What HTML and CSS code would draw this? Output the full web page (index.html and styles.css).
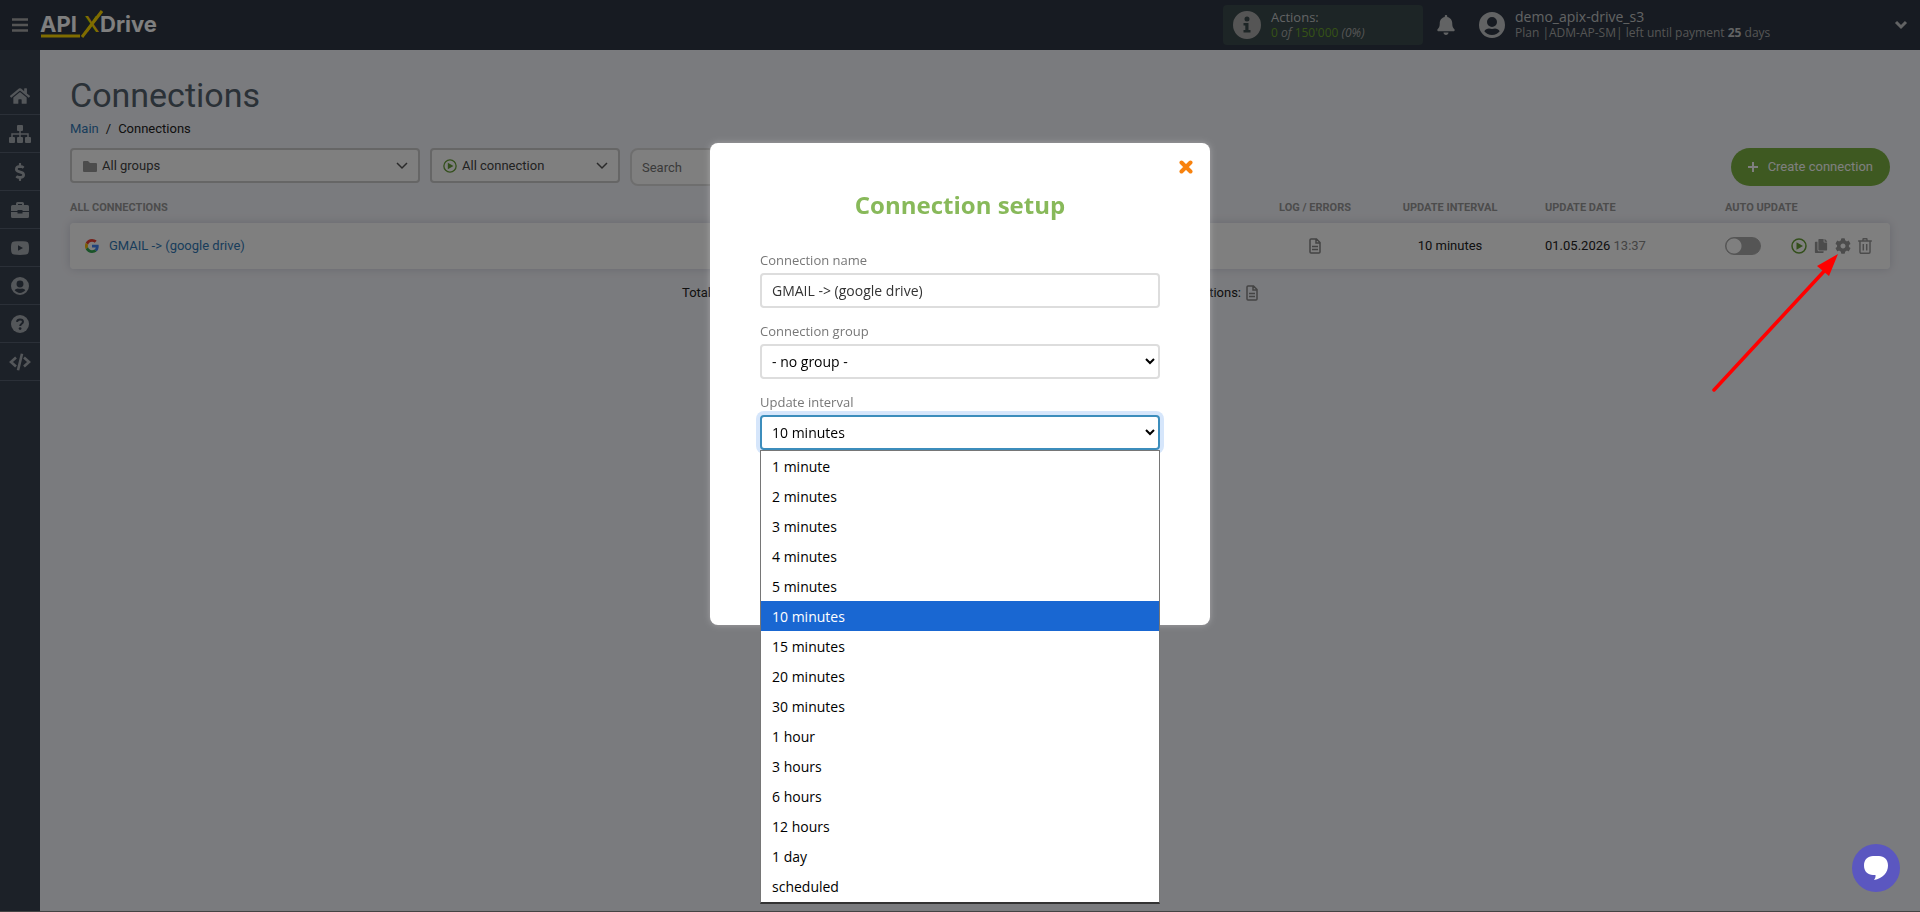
FILE: index.html
```html
<!DOCTYPE html>
<html lang="en">
    <head>
        <meta charset="UTF-8" />
        <meta name="viewport" content="width=device-width, initial-scale=1.0" />
        <title>Connections</title>
        <link rel="stylesheet" href="styles.css">
    </head>
    <body>
        <!-- Shared icons -->
        <svg class="sprite" aria-hidden="true">
            <symbol id="icon-user" viewBox="0 0 26 26">
                <path fill-rule="evenodd" d="M13 0a13 13 0 1 0 0 26 13 13 0 0 0 0-26zm0 5a5 5 0 1 1 0 10 5 5 0 0 1 0-10zm0 18c-3.200 0-5.900-1.500-7.700-3.700 1-1.800 2.900-2.800 4.700-2.800 1 .3 2 .5 3 .5s2-.2 3-.5c1.800 0 3.700 1 4.700 2.800-1.800 2.200-4.500 3.700-7.700 3.700z"></path>
            </symbol>
            <symbol id="icon-file" viewBox="0 0 12 16">
                <path d="M1 2a1 1 0 0 1 1-1h5.500L11 4.500V14a1 1 0 0 1-1 1H2a1 1 0 0 1-1-1zM7 1v4h4M3 8.500h6M3 11.500h6" fill="none" stroke="currentColor" stroke-width="1.500"></path>
            </symbol>
            <symbol id="icon-play" viewBox="0 0 16 16">
                <circle cx="8" cy="8" r="7" fill="none" stroke="currentColor" stroke-width="1.500"></circle>
                <path d="M5.500 4.200v7.600l6.500-3.800z"></path>
            </symbol>
            <symbol id="icon-chevron" viewBox="0 0 12 8">
                <path d="M1 1l5 5 5-5" fill="none" stroke="currentColor" stroke-width="1.500"></path>
            </symbol>
        </svg>

        <header class="header">
            <button class="icon-btn menu-btn" aria-label="Toggle menu">
                <svg width="16" height="14" viewBox="0 0 16 14"><path d="M0 1.500h16M0 7h16M0 12.500h16" stroke="currentColor" stroke-width="2.500"></path></svg>
            </button>
            <a class="logo" href="#">
                <svg width="130" height="40" viewBox="0 0 130 40">
                    <text x="0" y="27" class="logo-text">API</text>
                    <text x="44" y="27" class="logo-x">X</text>
                    <text x="60" y="27" class="logo-text">Drive</text>
                    <path d="M1 31h39M42 32L62 6" class="logo-line"></path>
                </svg>
            </a>
            <div class="actions-box">
                <svg width="28" height="28" viewBox="0 0 28 28">
                    <path fill-rule="evenodd" d="M14 0a14 14 0 1 0 0 28 14 14 0 0 0 0-28zm0 5.500a2.500 2.500 0 1 1 0 5 2.500 2.500 0 0 1 0-5zM10.500 12h5v7h2v2.500h-7V19h1.800v-4.500h-1.800z"></path>
                </svg>
                <div class="actions-text">
                    <div class="actions-title">Actions:</div>
                    <div class="actions-count"><span class="green">0</span> <i>of</i> <span class="green">150'000</span> <i>(0%)</i></div>
                </div>
            </div>
            <button class="icon-btn bell-btn" aria-label="Notifications">
                <svg width="18" height="20" viewBox="0 0 448 512"><path d="M224 512c35.320 0 63.970-28.650 63.970-64H160.030c0 35.350 28.650 64 63.970 64zm215.390-149.710c-19.320-20.760-55.470-51.990-55.470-154.290 0-77.700-54.480-139.900-127.940-155.160V32c0-17.670-14.320-32-31.980-32s-31.980 14.330-31.980 32v20.840C118.560 68.100 64.080 130.300 64.080 208c0 102.300-36.150 133.530-55.470 154.290-6 6.450-8.660 14.160-8.610 21.710.11 16.400 12.980 32 32.100 32h383.800c19.120 0 32-15.600 32.100-32 .05-7.550-2.610-15.270-8.610-21.710z"></path></svg>
            </button>
            <div class="user">
                <svg width="26" height="26"><use href="#icon-user"></use></svg>
                <div class="user-text">
                    <div class="user-name">demo_apix-drive_s3</div>
                    <div class="user-plan">Plan |ADM-AP-SM| left until payment <b>25</b> days</div>
                </div>
            </div>
            <button class="icon-btn user-toggle" aria-label="Account menu">
                <svg width="14" height="10" viewBox="0 0 14 10"><path d="M2 2l5 5 5-5" fill="none" stroke="currentColor" stroke-width="3"></path></svg>
            </button>
        </header>

        <div class="layout">
            <nav class="sidebar">
                <a href="#" aria-label="Home">
                    <svg width="20" height="18" viewBox="0 0 576 512"><path d="M280.370 148.260L96 300.110V464a16 16 0 0 0 16 16l112.060-.29a16 16 0 0 0 15.920-16V368a16 16 0 0 1 16-16h64a16 16 0 0 1 16 16v95.640a16 16 0 0 0 16 16.050L464 480a16 16 0 0 0 16-16V300L295.670 148.260a12.190 12.190 0 0 0-15.300 0zM571.600 251.470L488 182.560V44.050a12 12 0 0 0-12-12h-56a12 12 0 0 0-12 12v72.610L318.470 43a48 48 0 0 0-61 0L4.340 251.470a12 12 0 0 0-1.600 16.900l25.500 31A12 12 0 0 0 45.150 301l235.220-193.740a12.190 12.190 0 0 1 15.300 0L530.900 301a12 12 0 0 0 16.900-1.600l25.500-31a12 12 0 0 0-1.700-16.930z"></path></svg>
                </a>
                <a href="#" aria-label="Connections">
                    <svg width="22" height="18" viewBox="0 0 22 18">
                        <path d="M8 1a1 1 0 0 1 1-1h4a1 1 0 0 1 1 1v4a1 1 0 0 1-1 1H9a1 1 0 0 1-1-1zM0 13a1 1 0 0 1 1-1h4a1 1 0 0 1 1 1v4a1 1 0 0 1-1 1H1a1 1 0 0 1-1-1zM8 13a1 1 0 0 1 1-1h4a1 1 0 0 1 1 1v4a1 1 0 0 1-1 1H9a1 1 0 0 1-1-1zM16 13a1 1 0 0 1 1-1h4a1 1 0 0 1 1 1v4a1 1 0 0 1-1 1h-4a1 1 0 0 1-1-1z"></path>
                        <path d="M11 5v8M3 13V9h16v4" fill="none" stroke="currentColor" stroke-width="1.500"></path>
                    </svg>
                </a>
                <a href="#" aria-label="Billing">
                    <svg width="10" height="18" viewBox="0 0 288 512"><path d="M209.200 233.400l-108-31.600C88.700 198.200 80 186.500 80 173.500c0-16.300 13.200-29.500 29.500-29.500h66.300c12.200 0 24.200 3.700 34.200 10.500 6.100 4.100 14.300 3.100 19.500-2l34.800-34c7.100-6.900 6.100-18.400-1.800-24.500C238 74.800 207.400 64.100 176 64V16c0-8.800-7.200-16-16-16h-32c-8.800 0-16 7.200-16 16v48h-2.500C45.800 64-5.400 118.700.5 183.600c4.200 46.100 39.400 83.600 83.800 96.600l102.500 30c12.500 3.700 21.200 15.300 21.200 28.300 0 16.300-13.200 29.500-29.500 29.500h-66.300C100 368 88 364.300 78 357.500c-6.100-4.100-14.300-3.100-19.500 2l-34.800 34c-7.100 6.900-6.100 18.400 1.800 24.500 24.500 19.200 55.100 29.900 86.500 30v48c0 8.800 7.200 16 16 16h32c8.800 0 16-7.200 16-16v-48.200c46.600-.9 90.300-28.600 105.700-72.700 21.500-61.600-14.600-124.800-72.500-141.700z"></path></svg>
                </a>
                <a href="#" aria-label="Services">
                    <svg width="18" height="16" viewBox="0 0 18 16"><path fill-rule="evenodd" d="M5 3V1.500A1.500 1.500 0 0 1 6.500 0h5A1.500 1.500 0 0 1 13 1.500V3h3.500A1.500 1.500 0 0 1 18 4.500V9h-6.500V8h-5v1H0V4.500A1.500 1.500 0 0 1 1.500 3zm2-1v1h4V2zM0 10h6.500v1.500h5V10H18v4.500a1.500 1.500 0 0 1-1.500 1.500h-15A1.500 1.500 0 0 1 0 14.500z"></path></svg>
                </a>
                <a href="#" aria-label="Video lessons">
                    <svg width="18" height="14" viewBox="0 0 18 14"><path fill-rule="evenodd" d="M3 .5C7 0 11 0 15 .5c2 .3 3 1.500 3 6.500s-1 6.200-3 6.500c-4 .5-8 .5-12 0C1 13.200 0 12 0 7S1 .8 3 .5zM7 4.200v5.600L12 7z"></path></svg>
                </a>
                <a href="#" aria-label="Profile">
                    <svg width="18" height="18"><use href="#icon-user"></use></svg>
                </a>
                <a href="#" aria-label="Help">
                    <svg width="18" height="18" viewBox="0 0 18 18">
                        <circle cx="9" cy="9" r="9"></circle>
                        <path d="M6 6.800C6.200 5.200 7.400 4.400 9 4.400s3 .9 3 2.400c0 2-2.800 2-2.800 4.200" class="cutout"></path>
                        <circle cx="9.100" cy="13.600" r="1.400" class="cutout-dot"></circle>
                    </svg>
                </a>
                <a href="#" aria-label="API">
                    <svg width="22" height="18" viewBox="0 0 22 18"><path d="M7 4.500L2 9l5 4.500M15 4.500L20 9l-5 4.500M13 .8L9 17.200" fill="none" stroke="currentColor" stroke-width="2.600"></path></svg>
                </a>
            </nav>

            <main class="main">
                <h1>Connections</h1>
                <div class="breadcrumbs"><a href="#">Main</a><span>/</span><span>Connections</span></div>

                <div class="toolbar">
                    <div class="filter filter-group">
                        <svg class="folder" width="14" height="12" viewBox="0 0 14 12"><path d="M0 2a1 1 0 0 1 1-1h4l2 2h6a1 1 0 0 1 1 1v7a1 1 0 0 1-1 1H1a1 1 0 0 1-1-1z"></path></svg>
                        <select aria-label="Group"><option>All groups</option></select>
                        <svg class="arrow" width="12" height="8"><use href="#icon-chevron"></use></svg>
                    </div>
                    <div class="filter filter-status">
                        <svg class="play" width="14" height="14"><use href="#icon-play"></use></svg>
                        <select aria-label="Status"><option>All connection</option></select>
                        <svg class="arrow" width="12" height="8"><use href="#icon-chevron"></use></svg>
                    </div>
                    <input class="search" type="text" placeholder="Search" aria-label="Search">
                    <button class="create-btn">
                        <svg width="10" height="10" viewBox="0 0 10 10"><path d="M5 0v10M0 5h10" stroke="currentColor" stroke-width="2"></path></svg>
                        Create connection
                    </button>
                </div>

                <table class="connections">
                    <colgroup>
                        <col>
                        <col class="col-log">
                        <col class="col-interval">
                        <col class="col-date">
                        <col class="col-auto">
                        <col class="col-actions">
                    </colgroup>
                    <thead>
                        <tr>
                            <th class="name">All connections</th>
                            <th>Log / errors</th>
                            <th>Update interval</th>
                            <th class="left">Update date</th>
                            <th class="left" colspan="2">Auto update</th>
                        </tr>
                    </thead>
                    <tbody>
                        <tr>
                            <td>
                                <a class="connection" href="#">
                                    <svg width="14" height="14" viewBox="0 0 48 48">
                                        <path fill="#ea4335" d="M24 9.500c3.540 0 6.710 1.220 9.210 3.600l6.850-6.850C35.900 2.380 30.470 0 24 0 14.620 0 6.510 5.380 2.560 13.220l7.980 6.190C12.430 13.720 17.740 9.500 24 9.500z"></path>
                                        <path fill="#4285f4" d="M46.980 24.550c0-1.570-.15-3.090-.38-4.550H24v9.020h12.940c-.58 2.960-2.260 5.480-4.780 7.180l7.730 6c4.510-4.180 7.090-10.360 7.090-17.650z"></path>
                                        <path fill="#fbbc05" d="M10.530 28.590c-.48-1.450-.76-2.990-.76-4.590s.27-3.140.76-4.590l-7.980-6.190C.92 16.460 0 20.120 0 24s.92 7.540 2.560 10.780z"></path>
                                        <path fill="#34a853" d="M24 48c6.480 0 11.930-2.130 15.890-5.810l-7.730-6c-2.150 1.450-4.920 2.300-8.160 2.300-6.260 0-11.570-4.220-13.470-9.910l-7.980 6.190C6.510 42.620 14.620 48 24 48z"></path>
                                    </svg>
                                    GMAIL -&gt; (google drive)
                                </a>
                            </td>
                            <td><svg class="file" width="12" height="16"><use href="#icon-file"></use></svg></td>
                            <td>10 minutes</td>
                            <td class="left">01.05.2026 <span class="time">13:37</span></td>
                            <td class="left"><input class="switch" type="checkbox" aria-label="Auto update"></td>
                            <td>
                                <div class="row-actions">
                                    <button class="icon-btn play" aria-label="Run"><svg width="16" height="16"><use href="#icon-play"></use></svg></button>
                                    <button class="icon-btn" aria-label="Copy"><svg width="14" height="14" viewBox="0 0 448 512"><path d="M320 448v40c0 13.255-10.745 24-24 24H24c-13.255 0-24-10.745-24-24V120c0-13.255 10.745-24 24-24h72v296c0 30.879 25.121 56 56 56h168zm0-344V0H152c-13.255 0-24 10.745-24 24v368c0 13.255 10.745 24 24 24h272c13.255 0 24-10.745 24-24V128H344c-13.200 0-24-10.800-24-24zm120.971-31.029L375.029 7.029A24 24 0 0 0 358.059 0H352v96h96v-6.059a24 24 0 0 0-7.029-16.970z"></path></svg></button>
                                    <button class="icon-btn" aria-label="Settings"><svg width="16" height="16" viewBox="0 0 512 512"><path d="M487.400 315.700l-42.600-24.600c4.300-23.200 4.300-47 0-70.200l42.600-24.600c4.900-2.800 7.100-8.600 5.500-14-11.100-35.600-30-67.800-54.700-94.600-3.800-4.100-10-5.100-14.800-2.300L380.800 110c-17.900-15.400-38.500-27.300-60.800-35.100V25.800c0-5.600-3.900-10.500-9.400-11.700-36.700-8.200-74.300-7.800-109.200 0-5.500 1.200-9.400 6.100-9.400 11.700V75c-22.200 7.900-42.800 19.800-60.800 35.100L88.700 85.500c-4.900-2.800-11-1.900-14.800 2.300-24.700 26.700-43.600 58.900-54.700 94.600-1.700 5.400.6 11.200 5.500 14L67.300 221c-4.300 23.200-4.300 47 0 70.200l-42.600 24.600c-4.900 2.800-7.100 8.600-5.500 14 11.100 35.600 30 67.800 54.700 94.600 3.800 4.100 10 5.100 14.800 2.300l42.600-24.600c17.900 15.400 38.500 27.300 60.800 35.100v49.200c0 5.600 3.900 10.500 9.400 11.700 36.700 8.200 74.300 7.800 109.200 0 5.500-1.200 9.400-6.100 9.400-11.700v-49.200c22.200-7.900 42.800-19.800 60.800-35.100l42.600 24.600c4.900 2.800 11 1.900 14.800-2.300 24.700-26.700 43.600-58.900 54.700-94.600 1.500-5.500-.7-11.300-5.600-14.100zM256 336c-44.100 0-80-35.900-80-80s35.900-80 80-80 80 35.900 80 80-35.900 80-80 80z"></path></svg></button>
                                    <button class="icon-btn" aria-label="Delete"><svg width="14" height="16" viewBox="0 0 12 14"><path d="M0 2.700h12M4 2.500L4.500.7h3L8 2.500M1.600 3v9.300a1 1 0 0 0 1 1h6.800a1 1 0 0 0 1-1V3M4.500 5.300v5.700M7.500 5.300v5.700" fill="none" stroke="currentColor" stroke-width="1.300"></path></svg></button>
                                </div>
                            </td>
                        </tr>
                    </tbody>
                </table>

                <div class="totals">
                    <span>Total</span>
                    <span class="totals-log">connections: <svg class="file" width="12" height="16"><use href="#icon-file"></use></svg></span>
                </div>
            </main>
        </div>

        <!-- Connection setup -->
        <div class="overlay">
            <form class="modal">
                <button type="button" class="icon-btn close-btn" aria-label="Close">
                    <svg width="14" height="14" viewBox="0 0 14 14"><path d="M2.500 2.500l9 9M11.500 2.500l-9 9" stroke="currentColor" stroke-width="4" stroke-linecap="round"></path></svg>
                </button>
                <h2>Connection setup</h2>
                <div class="field">
                    <label for="name">Connection name</label>
                    <input id="name" type="text" value="GMAIL -&gt; (google drive)">
                </div>
                <div class="field">
                    <label for="group">Connection group</label>
                    <select id="group"><option>- no group -</option></select>
                </div>
                <div class="field">
                    <label for="interval">Update interval</label>
                    <select id="interval" class="focused"><option>10 minutes</option></select>
                    <ul class="options" role="listbox" aria-label="Update interval">
                        <li role="option">1 minute</li>
                        <li role="option">2 minutes</li>
                        <li role="option">3 minutes</li>
                        <li role="option">4 minutes</li>
                        <li role="option">5 minutes</li>
                        <li role="option" class="selected" aria-selected="true">10 minutes</li>
                        <li role="option">15 minutes</li>
                        <li role="option">20 minutes</li>
                        <li role="option">30 minutes</li>
                        <li role="option">1 hour</li>
                        <li role="option">3 hours</li>
                        <li role="option">6 hours</li>
                        <li role="option">12 hours</li>
                        <li role="option">1 day</li>
                        <li role="option">scheduled</li>
                    </ul>
                </div>
            </form>
        </div>

        <!-- Pointer to the settings icon -->
        <svg class="pointer" width="128" height="140" viewBox="0 0 128 140" aria-hidden="true">
            <path d="M2 138L116 15" stroke="#f00" stroke-width="3.500" stroke-linecap="round"></path>
            <path d="M126 2L105 14L117 24z" fill="#f00"></path>
        </svg>

        <button class="chat-btn" aria-label="Open chat">
            <svg width="24" height="24" viewBox="0 0 24 24"><path d="M9 0h6c5 0 9 3.500 9 9.500 0 7-5 13-14 14.500 1.200-1.500 1.700-3 1.500-5H9c-5 0-9-3.500-9-9.500S4 0 9 0z"></path></svg>
        </button>
    </body>
</html>
```

FILE: styles.css
```css
* {
    box-sizing: border-box;
}

body {
    margin: 0;
    min-height: 100vh;
    display: flex;
    flex-direction: column;
    background-color: #f5f6fc;
    border-bottom: 1px solid #888;
    font-family: Roboto, "Liberation Sans", sans-serif;
    font-size: 13px;
    line-height: 20px;
    color: #222;
}

svg {
    display: block;
    fill: currentColor;
    flex-shrink: 0;
}

a {
    color: #337ab7;
    text-decoration: none;
}

input,
select,
button {
    font: inherit;
}

.sprite {
    position: absolute;
    width: 0;
    height: 0;
}

.icon-btn {
    display: flex;
    padding: 0;
    border: none;
    background: none;
    color: inherit;
    cursor: pointer;
}

/* Header */
.header {
    display: flex;
    align-items: center;
    height: 50px;
    padding: 0 12px;
    background-color: #2e3744;
    color: #c4c6c8;
    font-family: "Open Sans", "Noto Sans", sans-serif;
}

.menu-btn {
    margin-right: 12px;
    color: #aaa;
}

.logo {
    color: #fff;
}

.logo-text {
    font: 700 22px Inter, sans-serif;
}

.logo-x {
    font: 500 22px Inter, sans-serif;
    fill: #ffd800;
}

.logo-line {
    fill: none;
    stroke: #ffd800;
    stroke-width: 3;
}

.actions-box {
    display: flex;
    align-items: center;
    gap: 10px;
    width: 200px;
    height: 40px;
    margin-left: auto;
    padding-left: 10px;
    border-radius: 4px;
    background-color: #3a4a4c;
    font-size: 12px;
    line-height: 16px;
}

.actions-box svg {
    color: #aaa;
}

.actions-title {
    font-size: 13px;
}

.actions-count {
    color: #aaa;
}

.green {
    color: #6ca52c;
}

.bell-btn {
    margin: 0 24px 0 14px;
}

.user {
    display: flex;
    align-items: center;
    gap: 10px;
    width: 400px;
}

.user-name {
    font-size: 14px;
    line-height: 16px;
}

.user-plan {
    color: #aaa;
    font-size: 12px;
    line-height: 16px;
}

.user-plan b {
    color: #c4c6c8;
}

.user-toggle {
    margin-left: 15px;
}

/* Sidebar */
.layout {
    flex: 1;
    display: flex;
}

.sidebar {
    width: 40px;
    padding-top: 27px;
    background-color: #394250;
}

.sidebar a {
    display: flex;
    align-items: center;
    justify-content: center;
    height: 38px;
    border-bottom: 1px solid #566070;
    color: #a9aeb4;
}

.cutout {
    fill: none;
    stroke: #394250;
    stroke-width: 2;
}

.cutout-dot {
    fill: #394250;
}

/* Page */
.main {
    flex: 1;
    padding: 25px 30px;
}

h1 {
    margin: 0 0 4px;
    font-size: 34px;
    line-height: 40px;
    font-weight: 400;
    color: #54626e;
}

.breadcrumbs {
    display: flex;
    gap: 7px;
    margin-bottom: 9px;
}

.toolbar {
    display: flex;
    align-items: flex-start;
    gap: 10px;
}

.filter {
    display: flex;
    align-items: center;
    gap: 5px;
    height: 35px;
    padding: 0 10px 0 11px;
    border: 2px solid #ccc;
    border-radius: 4px;
    background-color: #fff;
    color: #555;
}

.filter-group {
    width: 350px;
}

.filter-status {
    width: 190px;
}

.filter select {
    flex: 1;
    min-width: 0;
    padding: 0;
    border: none;
    background: none;
    appearance: none;
    color: #444;
}

.folder {
    color: #999;
}

.play {
    color: #689f38;
}

.search {
    width: 300px;
    height: 38px;
    padding: 0 10px;
    border: 2px solid #ddd;
    border-radius: 8px;
    background-color: #fff;
}

.create-btn {
    display: flex;
    align-items: center;
    gap: 10px;
    height: 38px;
    margin-left: auto;
    padding: 0 17px;
    border: none;
    border-radius: 19px;
    background-color: #7cb342;
    color: #fff;
    cursor: pointer;
}

/* Table of connections */
.connections {
    width: 100%;
    table-layout: fixed;
    border-collapse: separate;
    border-spacing: 0;
}

.col-log {
    width: 120px;
}

.col-interval {
    width: 150px;
}

.col-date {
    width: 180px;
}

.col-auto {
    width: 80px;
}

.col-actions {
    width: 105px;
}

.connections th {
    height: 37px;
    padding: 6px 0 0;
    font-size: 11px;
    font-weight: 700;
    text-transform: uppercase;
    color: #999;
}

.connections .name {
    text-align: left;
}

.connections td {
    height: 46px;
    padding: 0;
    background-color: #fff;
    text-align: center;
}

.connections .left {
    padding-left: 20px;
    text-align: left;
}

.connections tbody tr {
    border-radius: 4px;
    box-shadow: 0 0 10px rgba(0, 0, 50, 0.15);
}

.connections td:first-child {
    border-radius: 4px 0 0 4px;
}

.connections td:last-child {
    border-radius: 0 4px 4px 0;
}

.connection {
    display: flex;
    align-items: center;
    gap: 10px;
    padding-left: 15px;
}

.file {
    margin: 0 auto;
    color: #888;
}

.time {
    color: #888;
}

.switch {
    display: block;
    appearance: none;
    width: 36px;
    height: 18px;
    margin: 0;
    border: 1px solid #aaa;
    border-radius: 9px;
    background: radial-gradient(circle at 8px 8px, #fff 7px, #aaa 8px);
}

.row-actions {
    display: flex;
    align-items: center;
    gap: 7px;
    padding-left: 6px;
    color: #999;
}

.row-actions .play {
    color: #689f38;
}

.totals {
    display: flex;
    justify-content: space-between;
    width: 596px;
    margin: 14px auto;
    padding-right: 20px;
}

.totals-log {
    display: flex;
    align-items: center;
    gap: 5px;
}

/* Modal */
.overlay {
    position: fixed;
    inset: 0;
    display: flex;
    justify-content: center;
    align-items: flex-start;
    padding-top: 143px;
    background-color: rgba(0, 0, 0, 0.5);
}

.modal {
    position: relative;
    width: 500px;
    padding: 44px 50px 162px;
    border-radius: 8px;
    background-color: #fff;
    box-shadow: 0 0 6px rgba(255, 255, 255, 0.3);
    font-family: "Open Sans", "Noto Sans", sans-serif;
}

.close-btn {
    position: absolute;
    top: 17px;
    right: 17px;
    color: #f8820e;
}

h2 {
    margin: 0 0 27px;
    font-size: 24px;
    line-height: 36px;
    font-weight: 700;
    text-align: center;
    color: #88b95a;
}

.field {
    position: relative;
    margin-bottom: 13px;
}

.field label {
    display: block;
    margin-bottom: 3px;
    color: #777;
}

.field input,
.field select {
    display: block;
    width: 100%;
    height: 35px;
    padding: 0 10px;
    border: 2px solid #ddd;
    border-radius: 4px;
    background-color: #fff;
    font-size: 14px;
    color: #333;
}

.field select {
    padding: 0 6px;
    color: #000;
}

.field select.focused {
    border-color: #3c8dbc;
    box-shadow: 0 0 0 4px #d6e6fb;
}

.options {
    position: absolute;
    top: 100%;
    left: 0;
    right: 0;
    margin: 0;
    padding: 0 0 1px;
    border: 1px solid #767676;
    border-bottom: 2px solid #333;
    background-color: #fff;
    list-style: none;
    font-size: 14px;
    line-height: 28px;
    color: #000;
}

.options li {
    padding: 2px 11px 0;
}

.options .selected {
    background-color: #1967d2;
    color: #fff;
}

/* Floating items */
.pointer {
    position: absolute;
    top: 252px;
    right: 80px;
}

.chat-btn {
    position: fixed;
    right: 20px;
    bottom: 20px;
    display: flex;
    align-items: center;
    justify-content: center;
    width: 48px;
    height: 48px;
    padding: 0;
    border: none;
    border-radius: 50%;
    background-color: #5b57c0;
    color: #fff;
    cursor: pointer;
}
```
